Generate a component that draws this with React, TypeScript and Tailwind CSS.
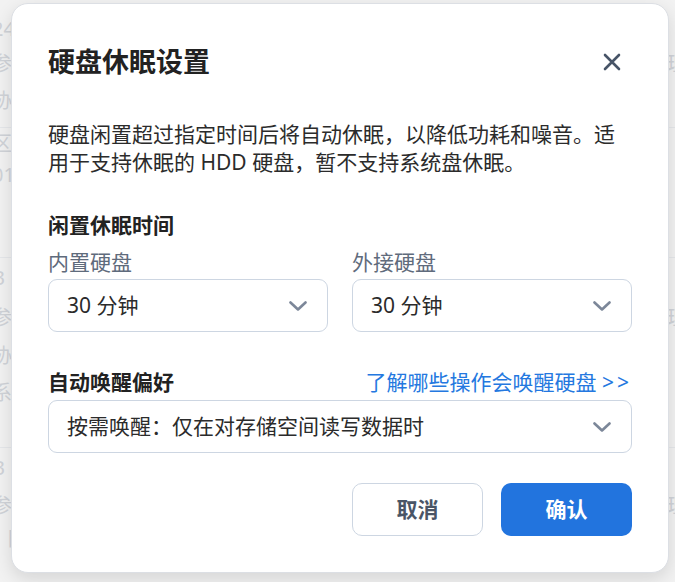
type BgRow = {
    h: number;
    left?: string;
    right?: string;
    line?: boolean;
};

const bgRows: BgRow[] = [
    { h: 14 },
    { h: 30, left: '24' },
    { h: 40, left: '参考', right: '理' },
    { h: 34, left: '协议' },
    { h: 10, line: true },
    { h: 32, left: '区域' },
    { h: 30, left: '01' },
    { h: 38, left: '' },
    { h: 30, line: true },
    { h: 40, left: 'B' },
    { h: 40, left: '参考', right: '理' },
    { h: 36, left: '协议' },
    { h: 38, left: '系统' },
    { h: 36, line: true },
    { h: 40, left: 'B' },
    { h: 36, left: '参考', right: '理' },
];

function Chevron() {
    return (
        <svg width="18" height="10" viewBox="0 0 18 10" fill="none" className="text-[#7c8799]">
            <path d="M1.5 1.5 L9 8.5 L16.5 1.5" stroke="currentColor" strokeWidth="2.6" strokeLinecap="round" strokeLinejoin="round" />
        </svg>
    );
}

function Select({ value, className }: { value: string; className?: string }) {
    return (
        <div
            className={`flex h-[53px] items-center justify-between rounded-[9px] border border-[#cdd6e2] bg-white pl-[18px] pr-[20px] text-[21px] text-[#2b2b2b] ${className ?? ''}`}
        >
            <span>{value}</span>
            <Chevron />
        </div>
    );
}

export default function App() {
    return (
        <div
            className="relative h-[582px] w-[675px] overflow-hidden bg-[#f2f2f2]"
            style={{ fontFamily: '"Noto Sans", "Noto Sans CJK SC", sans-serif' }}
        >
            {/* faded page behind the dialog */}
            <div className="flex flex-col text-[20px] text-[#d0d3d8]">
                {bgRows.map((row, i) => (
                    <div
                        key={i}
                        className={`flex items-center justify-between ${row.line ? 'border-b border-[#e5e7ea]' : ''}`}
                        style={{ height: row.h }}
                    >
                        <span className="-ml-[8px]">{row.left}</span>
                        <span className="mr-[-12px]">{row.right}</span>
                    </div>
                ))}
                <div className="flex items-center gap-6 pl-[6px] text-[20px]">
                    <span>日学</span>
                    <span className="ml-[180px]">实列号</span>
                    <span>主机</span>
                </div>
            </div>

            {/* dialog */}
            <div className="absolute left-[11px] top-[3px] flex h-[570px] w-[658px] flex-col rounded-[17px] border border-[#dcdfe4] bg-white px-9 pt-10 shadow-[0_6px_18px_rgba(0,0,0,0.12)]">
                <div className="flex w-[584px] items-center justify-between">
                    <h1 className="text-[27px] font-bold leading-[36px] text-[#222]">硬盘休眠设置</h1>
                    <button className="mr-[10px] flex h-5 w-5 items-center justify-center text-[#475467]">
                        <svg width="18" height="18" viewBox="0 0 18 18" fill="none">
                            <path d="M2 2 L16 16 M16 2 L2 16" stroke="currentColor" strokeWidth="2.6" strokeLinecap="round" />
                        </svg>
                    </button>
                </div>

                <p className="mt-10 w-[584px] text-[21px] leading-[28px] text-[#2b2b2b]">
                    硬盘闲置超过指定时间后将自动休眠，以降低功耗和噪音。适用于支持休眠的 HDD 硬盘，暂不支持系统盘休眠。
                </p>

                <h2 className="mt-[35px] text-[21px] font-bold leading-[28px] text-[#222]">闲置休眠时间</h2>
                <div className="mt-[9px] grid w-[584px] grid-cols-2 gap-6">
                    <div className="flex flex-col">
                        <span className="text-[21px] leading-[28px] text-[#5f6b7c]">内置硬盘</span>
                        <Select value="30 分钟" className="mt-[3px]" />
                    </div>
                    <div className="flex flex-col">
                        <span className="text-[21px] leading-[28px] text-[#5f6b7c]">外接硬盘</span>
                        <Select value="30 分钟" className="mt-[3px]" />
                    </div>
                </div>

                <div className="mt-9 flex w-[584px] items-center justify-between">
                    <h2 className="text-[21px] font-bold leading-[28px] text-[#222]">自动唤醒偏好</h2>
                    <a className="text-[21px] leading-[28px] text-[#2478e0]">
                        了解哪些操作会唤醒硬盘 <span className="tracking-[3px]">&gt;&gt;</span>
                    </a>
                </div>
                <Select value="按需唤醒：仅在对存储空间读写数据时" className="mt-1 w-[584px]" />

                <div className="mt-[30px] flex w-[584px] justify-end gap-[18px]">
                    <button className="h-[53px] w-[131px] rounded-[10px] border border-[#cdd6e2] bg-white text-[21px] font-bold text-[#4a5566]">
                        取消
                    </button>
                    <button className="h-[53px] w-[131px] rounded-[10px] bg-[#2274de] text-[21px] font-bold text-white">
                        确认
                    </button>
                </div>
            </div>
        </div>
    );
}
